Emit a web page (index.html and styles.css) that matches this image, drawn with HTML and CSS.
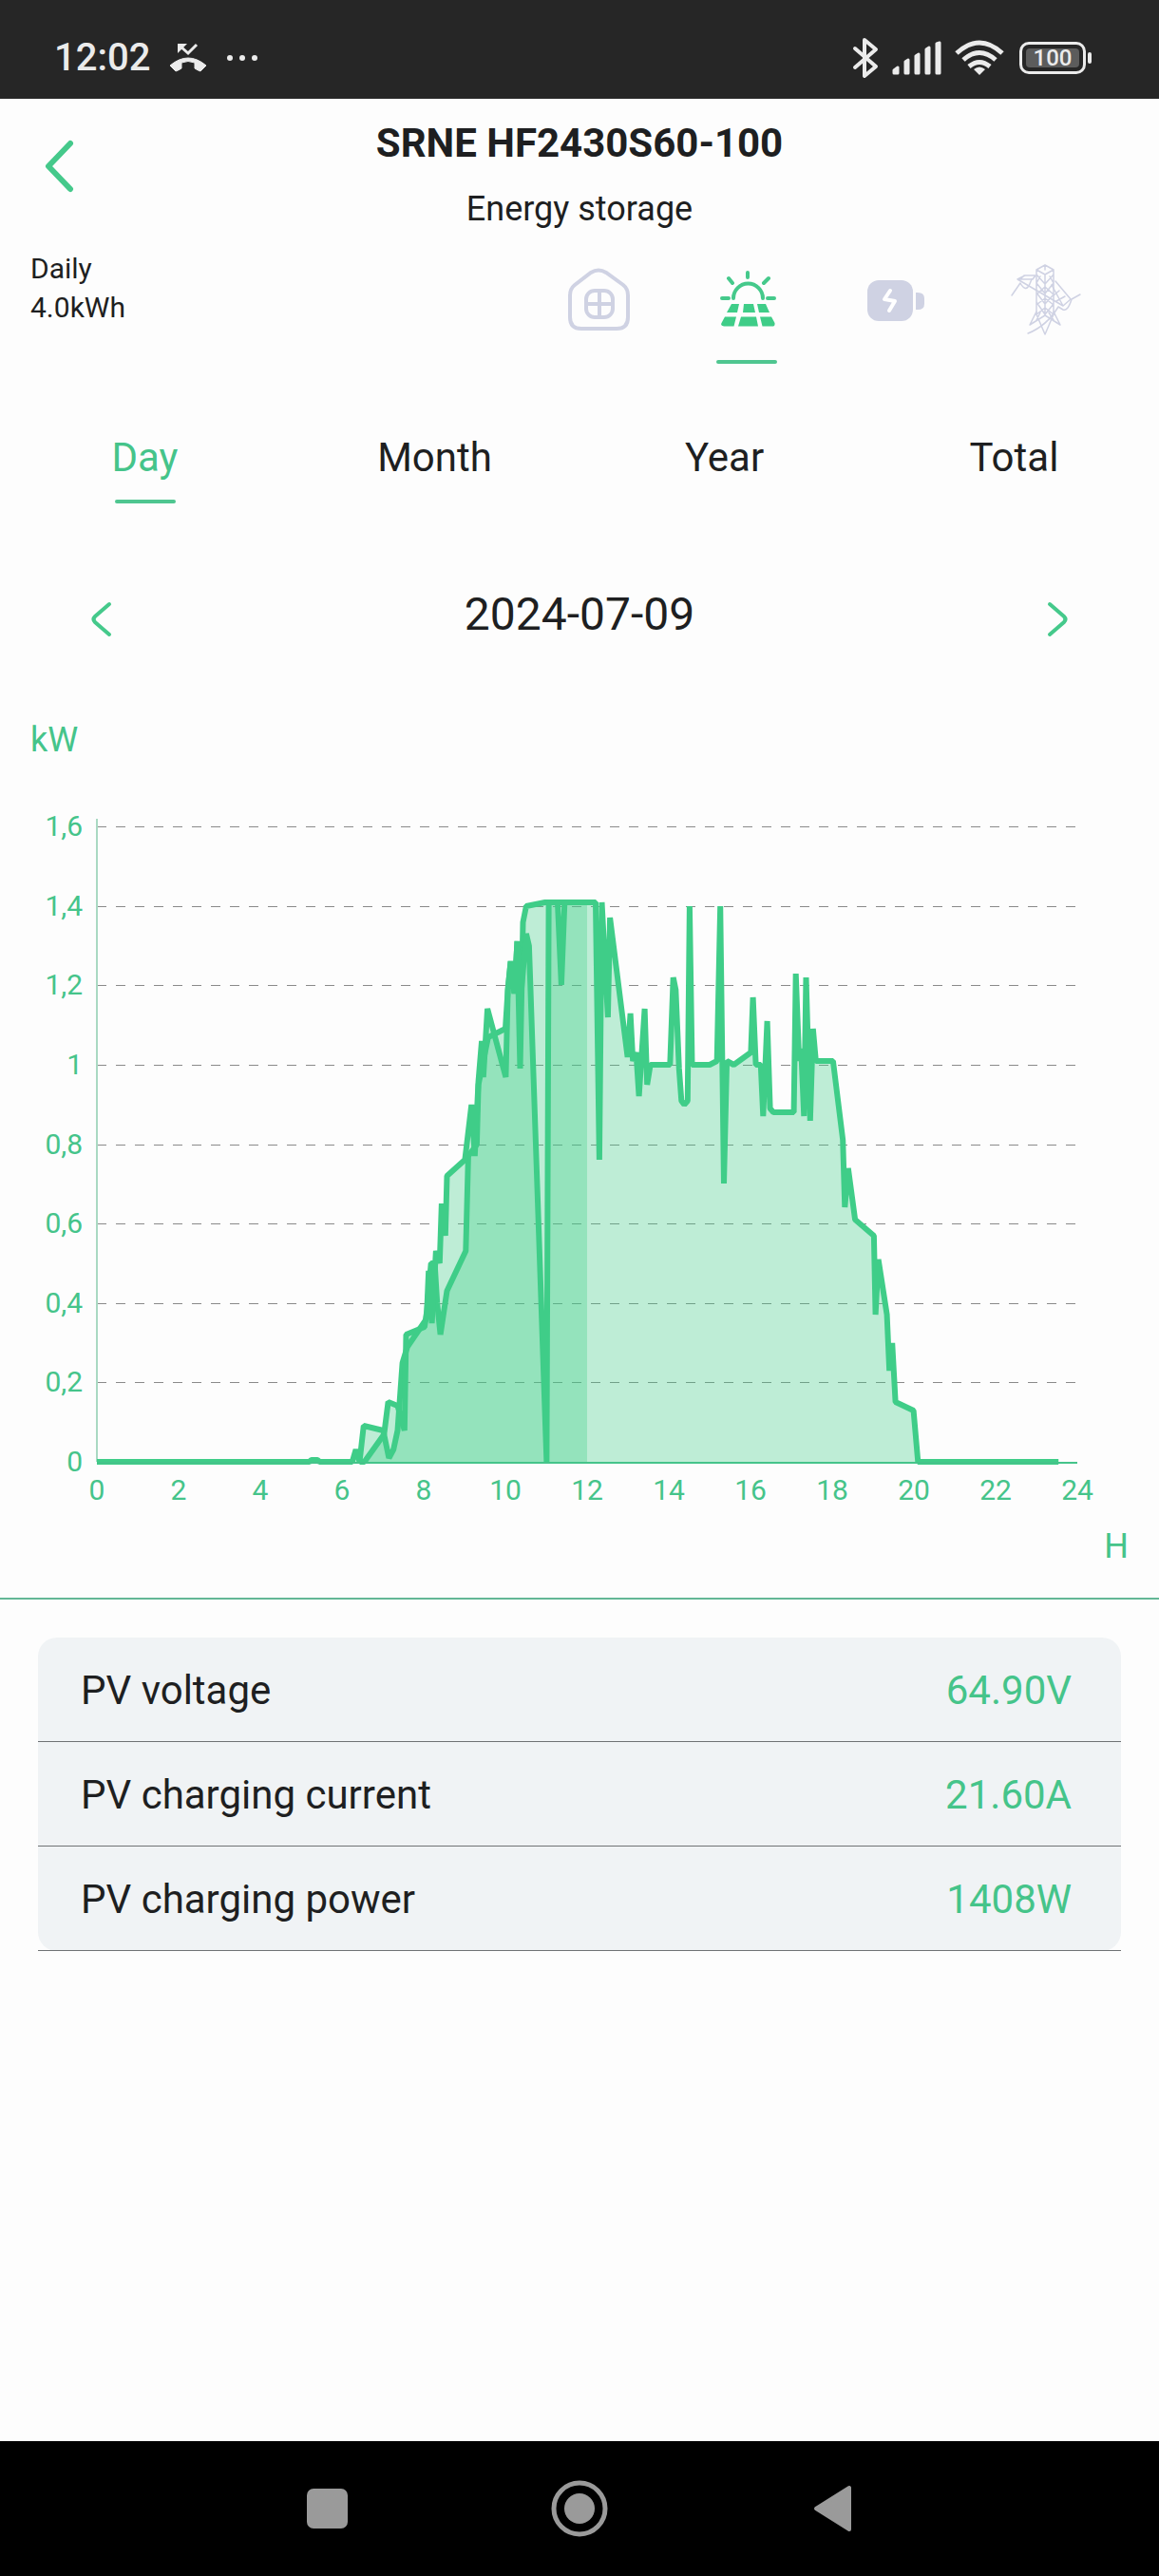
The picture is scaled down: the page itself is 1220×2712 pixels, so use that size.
FILE: index.html
```html
<!DOCTYPE html>
<html lang="en">
<head>
    <meta charset="utf-8">
    <meta name="viewport" content="width=device-width, initial-scale=1">
    <title>Energy storage</title>
    <link rel="stylesheet" href="styles.css">
</head>
<body>
    <div class="statusBar">
        <span class="time">12:02</span>
        <svg class="callIcon" width="40" height="32" viewBox="0 0 40 32">
            <path d="M1 24Q20 8 39 24L33 30Q30 29 27 27V21Q20 18 13 21V27Q10 29 7 30Z" fill="#ebebeb" stroke="#ebebeb" stroke-width="1" stroke-linejoin="round"/>
            <path d="M29 2L20 11L11 3" fill="none" stroke="#ebebeb" stroke-width="3"/>
            <path d="M9 1H19L9 11Z" fill="#ebebeb"/>
        </svg>
        <svg class="moreIcon" width="34" height="8" viewBox="0 0 34 8">
            <circle cx="4" cy="4" r="3" fill="#ebebeb"/>
            <circle cx="17" cy="4" r="3" fill="#ebebeb"/>
            <circle cx="30" cy="4" r="3" fill="#ebebeb"/>
        </svg>
        <div class="statusRight">
            <svg width="28" height="44" viewBox="0 0 28 44">
                <path d="M3 12L25 31L13 41V3L25 13L3 32" fill="none" stroke="#ebebeb" stroke-width="4" stroke-linejoin="round" stroke-linecap="round"/>
            </svg>
            <svg class="signalIcon" width="52" height="36" viewBox="0 0 52 36">
                <path d="M2 34V31L6 28V34ZM14 34V22L17 20V34ZM25 34V16L28 14V34ZM36 34V9L39 7V34ZM47 34V3L50 2V34Z" fill="#ebebeb" stroke="#ebebeb" stroke-width="3" stroke-linejoin="round"/>
            </svg>
            <svg class="wifiIcon" width="52" height="38" viewBox="0 0 52 38">
                <path d="M2 14Q26 -8 50 14M9 21Q26 6 43 21M15 28Q26 19 37 28" fill="none" stroke="#ebebeb" stroke-width="5"/>
                <path d="M26 37L20 31Q26 26 32 31Z" fill="#ebebeb"/>
            </svg>
            <div class="battery"><span>100</span></div>
        </div>
    </div>

    <header class="header">
        <button class="backBtn" aria-label="Back">
            <svg width="36" height="56" viewBox="0 0 36 56">
                <path d="M30 4L7 28L30 52" fill="none" stroke="#45c98b" stroke-width="6" stroke-linecap="round" stroke-linejoin="round"/>
            </svg>
        </button>
        <div class="titles">
            <h1>SRNE HF2430S60-100</h1>
            <p>Energy storage</p>
        </div>
    </header>

    <section class="summary">
        <div class="total">
            <div>Daily</div>
            <div>4.0kWh</div>
        </div>
        <nav class="sources">
            <button class="source" aria-label="Home">
                <svg width="78" height="78" viewBox="0 0 78 78">
                    <g fill="none" stroke="#cfd2e3" stroke-width="4">
                        <path d="M31 9Q39 4 47 9L65 22Q70 26 70 33V56Q70 68 58 68H21Q9 68 9 56V33Q9 26 14 22Z"/>
                        <rect x="26" y="28" width="28" height="28" rx="9"/>
                        <path d="M40 28V56M26 42H54"/>
                    </g>
                </svg>
            </button>
            <button class="source active" aria-label="Solar">
                <svg width="78" height="78" viewBox="0 0 78 78">
                    <g fill="none" stroke="#45c98b" stroke-width="4" stroke-linecap="round">
                        <path d="M25 36A15.500 15.500 0 0 1 56 36M40 9V14M20 15L24 20M62 15L57 20M13 36H20M61 36H68"/>
                    </g>
                    <path d="M23 42H31L29 51H18ZM36 42H46L48 51H35ZM50 42H59L63 51H52ZM16 55.500H28L25.500 65.500H15Q11 65 12.500 62ZM33 55.500H49L51 65.500H30ZM53 55.500H65L68.500 62Q69 65.500 66 65.500H55.500Z" fill="#3fcd88"/>
                </svg>
            </button>
            <button class="source" aria-label="Battery">
                <svg width="78" height="78" viewBox="0 0 78 78">
                    <rect x="10" y="17" width="48" height="43" rx="12" fill="#cfd2e3"/>
                    <path d="M61 30H63Q70 30 70 36V42Q70 48 63 48H61Z" fill="#cfd2e3"/>
                    <path d="M34 28L28 37L39 39L33 49" fill="none" stroke="#fff" stroke-width="4" stroke-linecap="round" stroke-linejoin="round"/>
                </svg>
            </button>
            <button class="source" aria-label="Grid">
                <svg width="78" height="78" viewBox="0 0 78 78">
                    <g fill="none" stroke="#cfd2e3" stroke-width="1.500" stroke-linejoin="round" stroke-linecap="round">
                        <path d="M32 6L41 1L50 6V53M32 6V53M32 6L41 11L50 6M41 1V6M41 11V54M32 11L41 21L50 11M32 20L41 31L50 20M32 30L41 42L50 32M32 40L41 53L50 42M32 20L36 13M50 20L46 13M32 32L41 24L50 32M32 43L41 36L50 43M32 53L41 46L50 53"/>
                        <path d="M32 50L25 64L41 54L57 64L50 50M32 53L41 74L50 53M32 59L36 51M50 59L45 51"/>
                        <path d="M12 16L20 12H31M12 16H28L31 12M12 16L60 44L68 37L52 18M60 44L48 22M56 28L50 33M62 34L53 39M19 12L15 16"/>
                        <path d="M6 33L15 20Q20 29 24 23L27 16M78 32L69 37Q65 50 60 48L55 45Q43 65 23 73"/>
                    </g>
                </svg>
            </button>
        </nav>
    </section>

    <nav class="tabs">
        <button class="tab active">Day</button>
        <button class="tab">Month</button>
        <button class="tab">Year</button>
        <button class="tab">Total</button>
    </nav>

    <div class="datePicker">
        <button class="arrowBtn" id="prevDay" aria-label="Previous day">
            <svg width="46" height="46" viewBox="0 0 46 46">
                <path d="M31 7L16 20Q13 23 16 26L31 39" fill="none" stroke="#45c98b" stroke-width="4" stroke-linecap="round"/>
            </svg>
        </button>
        <span class="date">2024-07-09</span>
        <button class="arrowBtn" id="nextDay" aria-label="Next day">
            <svg width="46" height="46" viewBox="0 0 46 46">
                <path d="M15 7L30 20Q33 23 30 26L15 39" fill="none" stroke="#45c98b" stroke-width="4" stroke-linecap="round"/>
            </svg>
        </button>
    </div>

    <section class="chartBlock">
        <div class="unit">kW</div>
        <svg class="chart" id="chart" viewBox="0 0 1220 760"></svg>
        <div class="unit unitX">H</div>
    </section>

    <section class="details">
        <table>
            <tr><th scope="row">PV voltage</th><td>64.90V</td></tr>
            <tr><th scope="row">PV charging current</th><td>21.60A</td></tr>
            <tr><th scope="row">PV charging power</th><td>1408W</td></tr>
        </table>
    </section>

    <div class="navBar">
        <button aria-label="Recent apps">
            <svg width="60" height="60" viewBox="0 0 60 60"><rect x="9" y="9" width="43" height="42" rx="7" fill="#9a9a9a"/></svg>
        </button>
        <button aria-label="Home screen">
            <svg width="60" height="60" viewBox="0 0 60 60">
                <circle cx="30" cy="30" r="27" fill="none" stroke="#9a9a9a" stroke-width="5"/>
                <circle cx="30" cy="30" r="16" fill="#9a9a9a"/>
            </svg>
        </button>
        <button aria-label="Back">
            <svg width="60" height="60" viewBox="0 0 60 60"><path d="M13 30L48 8V52Z" fill="#9a9a9a" stroke="#9a9a9a" stroke-width="4" stroke-linejoin="round"/></svg>
        </button>
    </div>

    <script src="chart.js"></script>
</body>
</html>
```
FILE: styles.css
```css
body {
    margin: 0;
    min-height: 100vh;
    display: flex;
    flex-direction: column;
    background: #fdfdfd;
    color: #1e1f21;
    font-family: Roboto, "Liberation Sans", sans-serif;
}

button {
    padding: 0;
    border: none;
    background: none;
    color: inherit;
    font-family: inherit;
    cursor: pointer;
}

svg {
    display: block;
}

.statusBar {
    height: 104px;
    box-sizing: border-box;
    padding: 17px 77px 0 57px;
    display: flex;
    align-items: center;
    background: #262626;
    color: #ebebeb;
}

.time {
    font-size: 40px;
    font-weight: 500;
    line-height: 48px;
}

.callIcon {
    margin-left: 20px;
}

.moreIcon {
    margin-left: 20px;
}

.statusRight {
    margin-left: auto;
    display: flex;
    align-items: center;
    gap: 14px;
}

.battery {
    position: relative;
    width: 70px;
    height: 34px;
    box-sizing: border-box;
    margin-left: 2px;
    padding: 4px;
    border: 3px solid #ebebeb;
    border-radius: 10px;
}

.battery span {
    display: block;
    border-radius: 4px;
    background: #5c5c5c;
    font-size: 24px;
    font-weight: 500;
    line-height: 20px;
    text-align: center;
}

.battery::after {
    content: "";
    position: absolute;
    top: 8px;
    right: -9px;
    width: 4px;
    height: 12px;
    border-radius: 2px;
    background: #ebebeb;
}

.header {
    display: grid;
    grid-template-columns: 120px 1fr 120px;
    padding-top: 23px;
}

.backBtn {
    justify-self: start;
    align-self: start;
    margin: 20px 0 0 44px;
}

.titles {
    text-align: center;
}

.titles h1 {
    margin: 0 0 23px;
    font-size: 42px;
    font-weight: 700;
    line-height: 48px;
}

.titles p {
    margin: 0;
    font-size: 36px;
    line-height: 44px;
}

.summary {
    display: flex;
    justify-content: space-between;
    padding: 20px 83px 0 32px;
}

.total {
    font-size: 30px;
    line-height: 41px;
}

.sources {
    display: flex;
    gap: 78px;
    padding-top: 16px;
}

.source svg {
    overflow: visible;
}

.source::after {
    content: "";
    display: block;
    width: 64px;
    height: 4px;
    margin: 23px auto 0;
    border-radius: 2px;
}

.source.active::after,
.tab.active::after {
    background: #4fc690;
}

.tabs {
    display: grid;
    grid-template-columns: repeat(4, 1fr);
    margin-top: 75px;
}

.tab {
    font-size: 42px;
    line-height: 48px;
}

.tab::after {
    content: "";
    display: block;
    width: 64px;
    height: 4px;
    margin: 20px auto 0;
    border-radius: 2px;
}

.tab.active {
    color: #45c48a;
}

.datePicker {
    display: flex;
    justify-content: space-between;
    align-items: flex-end;
    margin-top: 89px;
    padding: 0 84px;
}

.date {
    font-size: 48px;
    line-height: 56px;
}

.chartBlock {
    margin-top: 82px;
    padding-bottom: 32px;
    border-bottom: 2px solid #63b796;
}

.unit {
    padding: 0 32px;
    color: #45c48a;
    font-size: 36px;
    line-height: 44px;
}

.unitX {
    margin-top: 6px;
    text-align: right;
}

.chart {
    width: 100%;
    height: auto;
    margin-top: 39px;
}

.chart text {
    fill: #45c48a;
    font-size: 30px;
}

.chart .xLabel {
    text-anchor: middle;
}

.chart .yLabel {
    text-anchor: end;
}

.grid {
    stroke: #8a8a8a;
    stroke-width: 1;
    stroke-dasharray: 10 10;
}

.axisY {
    stroke: #a9d9c2;
    stroke-width: 2;
}

.axisX {
    stroke: #45c48a;
    stroke-width: 2;
}

.area {
    fill: #3fcd88;
    fill-opacity: 0.33;
}

.line {
    fill: none;
    stroke: #3fcd88;
    stroke-width: 6;
    stroke-linejoin: bevel;
}

.details {
    padding: 40px;
}

.details table {
    width: 100%;
    border-spacing: 0;
    border-radius: 20px;
    background: #f0f3f5;
    font-size: 42px;
    line-height: 48px;
}

.details th,
.details td {
    padding: 32px 52px 29px 45px;
    border-bottom: 1px solid #6f7274;
    font-weight: 400;
    text-align: left;
}

.details td {
    color: #45c48a;
    text-align: right;
}

.navBar {
    height: 142px;
    margin-top: auto;
    display: flex;
    justify-content: center;
    align-items: center;
    gap: 206px;
    background: #000;
}
```
FILE: chart.js
```js
"use strict";

const chart = document.getElementById("chart");
const left = 102;
const bottom = 699;
const hourWidth = 43;
const kwHeight = 418;

// [hour, kW]
const fullDay = [
    [0, 0], [5.2, 0], [5.25, 0.005], [5.4, 0.005], [5.45, 0], [6.25, 0], [6.34, 0.03], [6.43, 0], [6.53, 0.09], [7.01, 0.08],
    [7.15, 0.01], [7.26, 0.03], [7.36, 0.08], [7.48, 0.25], [7.6, 0.29], [8.06, 0.36], [8.18, 0.5], [8.27, 0.5],
    [8.33, 0.4], [8.41, 0.32], [8.57, 0.43], [9.03, 0.53], [9.09, 0.77], [9.3, 0.8], [9.34, 0.95], [9.58, 1.07],
    [10, 1.09], [10.06, 1.19], [10.13, 1.26], [10.22, 1.18], [10.29, 1.31], [10.36, 0.99], [10.43, 1.36],
    [10.51, 1.4], [10.97, 1.41], [12.21, 1.41], [12.3, 0.76], [12.36, 1.41], [12.51, 1.12], [12.56, 1.37],
    [12.99, 1.02], [13.06, 1.13], [13.12, 1.01], [13.2, 1.03], [13.27, 0.92], [13.41, 1.14], [13.47, 0.95],
    [13.55, 1], [14.03, 1], [14.11, 1.22], [14.17, 1.19], [14.25, 0.99], [14.31, 0.91], [14.38, 0.9],
    [14.46, 0.91], [14.51, 1.4], [14.57, 1], [15, 1], [15.18, 1.01], [15.26, 1.4], [15.35, 0.7],
    [15.42, 1.01], [15.59, 1], [16.01, 1.03], [16.06, 1.17], [16.13, 1], [16.25, 1], [16.31, 0.87],
    [16.41, 1.11], [16.48, 0.89], [16.56, 0.88], [17.06, 0.88], [17.11, 1.23], [17.19, 1.01], [17.24, 1.04],
    [17.31, 0.87], [17.36, 1.22], [17.46, 0.86], [17.53, 1.09], [17.6, 1.01], [18.02, 1.01], [18.26, 0.81],
    [18.31, 0.64], [18.39, 0.74], [18.56, 0.61], [19.02, 0.57], [19.06, 0.37], [19.13, 0.51], [19.34, 0.37],
    [19.4, 0.23], [19.47, 0.3], [19.55, 0.15], [19.99, 0.13], [20.1, 0], [23.54, 0]
];
const untilNoon = [
    [6.43, 0], [6.55, 0], [7.03, 0.07], [7.13, 0.15], [7.36, 0.14], [7.53, 0.08], [7.57, 0.32], [8.02, 0.34],
    [8.08, 0.38], [8.12, 0.48], [8.2, 0.35], [8.3, 0.53], [8.39, 0.5], [8.44, 0.65], [8.53, 0.57],
    [8.57, 0.72], [9.01, 0.76], [9.17, 0.9], [9.25, 0.77], [9.34, 0.96], [9.42, 1.06], [9.46, 0.97],
    [9.56, 1.14], [10.01, 0.97], [10.06, 1.19], [10.13, 1.26], [10.22, 1.18], [10.29, 1.31], [10.36, 1.15],
    [10.51, 1.33], [10.58, 1.3], [11.01, 0], [11.06, 1.41], [11.28, 1.41], [11.37, 1.2], [11.45, 1.41], [12, 1.41]
];

function x(hour) {
    return left + hour * hourWidth;
}

function y(kw) {
    return Math.round(bottom - kw * kwHeight);
}

function add(name, attrs, text) {
    let el = document.createElementNS("http://www.w3.org/2000/svg", name);
    for (let key in attrs) el.setAttribute(key, attrs[key]);
    if (text) el.textContent = text;
    chart.appendChild(el);
}

function addLine(cls, x1, y1, x2, y2) {
    add("line", { class: cls, x1: x1, y1: y1, x2: x2, y2: y2 });
}

function points(data) {
    return data.map(p => x(p[0]).toFixed(1) + "," + y(p[1])).join(" ");
}

for (let i = 0; i <= 8; i++) {
    let kw = i * 2 / 10;
    if (i > 0) addLine("grid", left, y(kw) + 0.5, x(24), y(kw) + 0.5);
    add("text", { class: "yLabel", x: 87, y: y(kw) + 10 }, String(kw).replace(".", ","));
}
for (let hour = 0; hour <= 24; hour += 2) {
    add("text", { class: "xLabel", x: x(hour), y: bottom + 40 }, String(hour));
}

addLine("axisY", left, 22, left, bottom);
[fullDay, untilNoon].forEach(function(data) {
    let first = x(data[0][0]) + "," + bottom;
    let last = x(data[data.length - 1][0]) + "," + bottom;
    add("polygon", { class: "area", points: first + " " + points(data) + " " + last });
});
[fullDay, untilNoon].forEach(data => add("polyline", { class: "line", points: points(data) }));
addLine("axisX", left, bottom + 1, x(24), bottom + 1);
```
